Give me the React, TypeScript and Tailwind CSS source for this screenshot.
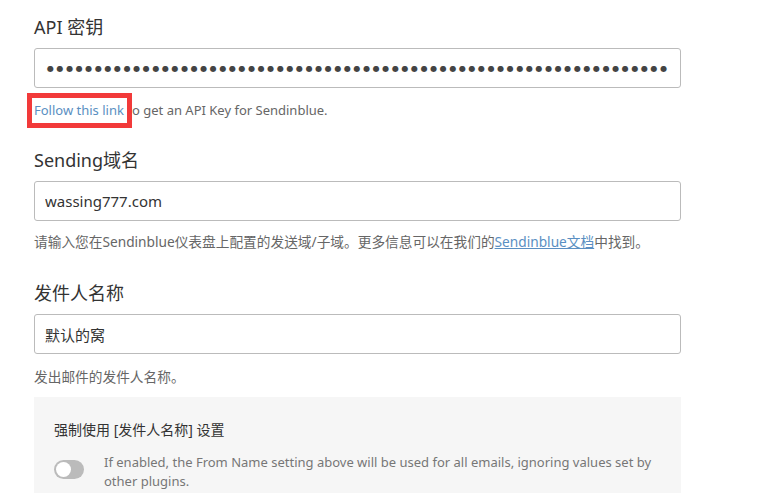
import React from "react"

const font = { fontFamily: '"Noto Sans", "Noto Sans CJK SC", sans-serif' }

export default function App() {
  const dots = "●".repeat(65)

  return (
    <div className="min-h-screen w-[768px] h-[493px] overflow-hidden bg-white text-[#333]" style={font}>
      <div className="w-[647px] ml-[34px] pt-[15px]">
        {/* API key */}
        <div className="text-[18px] leading-[24px] text-[#333]">API 密钥</div>
        <div className="mt-[9px] h-[40px] border border-[#bbb] rounded-[3px] pl-[12px] pt-[2px] flex items-center overflow-hidden">
          <span
            className="text-[#444] text-[8px] tracking-[2.6px] whitespace-nowrap"
            style={{ fontFamily: '"DejaVu Sans", sans-serif' }}
          >
            {dots}
          </span>
        </div>
        <div className="mt-[12px] text-[13px] leading-[20px] text-[#666] whitespace-nowrap">
          <span className="relative text-[#5a8fc2]">
            Follow this link
            <span className="absolute -left-[7px] -right-[8px] -top-[8px] -bottom-[9px] border-[5px] border-[#f23a3a]" />
          </span>{" "}
          to get an API Key for Sendinblue.
        </div>

        {/* Sending domain */}
        <div className="mt-[28px] text-[18px] leading-[24px]">Sending域名</div>
        <input
          readOnly
          value="wassing777.com"
          className="mt-[9px] block w-full h-[40px] border border-[#bbb] rounded-[3px] px-[10px] text-[15px] text-[#333] outline-none"
          style={font}
        />
        <div className="mt-[11px] text-[13.7px] leading-[20px] text-[#666] whitespace-nowrap">
          请输入您在Sendinblue仪表盘上配置的发送域/子域。更多信息可以在我们的
          <a className="text-[#5a8fc2] underline">Sendinblue文档</a>中找到。
        </div>

        {/* From name */}
        <div className="mt-[29px] text-[18px] leading-[24px]">发件人名称</div>
        <input
          readOnly
          value="默认的窝"
          className="mt-[9px] block w-full h-[40px] border border-[#bbb] rounded-[3px] px-[10px] text-[15px] text-[#333] outline-none"
          style={font}
        />
        <div className="mt-[13px] text-[13.7px] leading-[20px] text-[#666]">发出邮件的发件人名称。</div>

        {/* Force from name */}
        <div className="mt-[10px] bg-[#f6f6f6] pt-[23px] pb-[20px] px-[20px]">
          <div className="text-[14px] leading-[20px] text-[#333]">强制使用 [发件人名称] 设置</div>
          <div className="mt-[13px] flex gap-[20px]">
            <div className="mt-[7px] w-[30px] h-[19px] shrink-0 rounded-full bg-[#bbb] p-[2px]">
              <div className="w-[15px] h-[15px] rounded-full bg-white" />
            </div>
            <div className="text-[13px] leading-[19px] text-[#777]">
              If enabled, the From Name setting above will be used for all emails, ignoring values set by other plugins.
            </div>
          </div>
        </div>
      </div>
    </div>
  )
}
